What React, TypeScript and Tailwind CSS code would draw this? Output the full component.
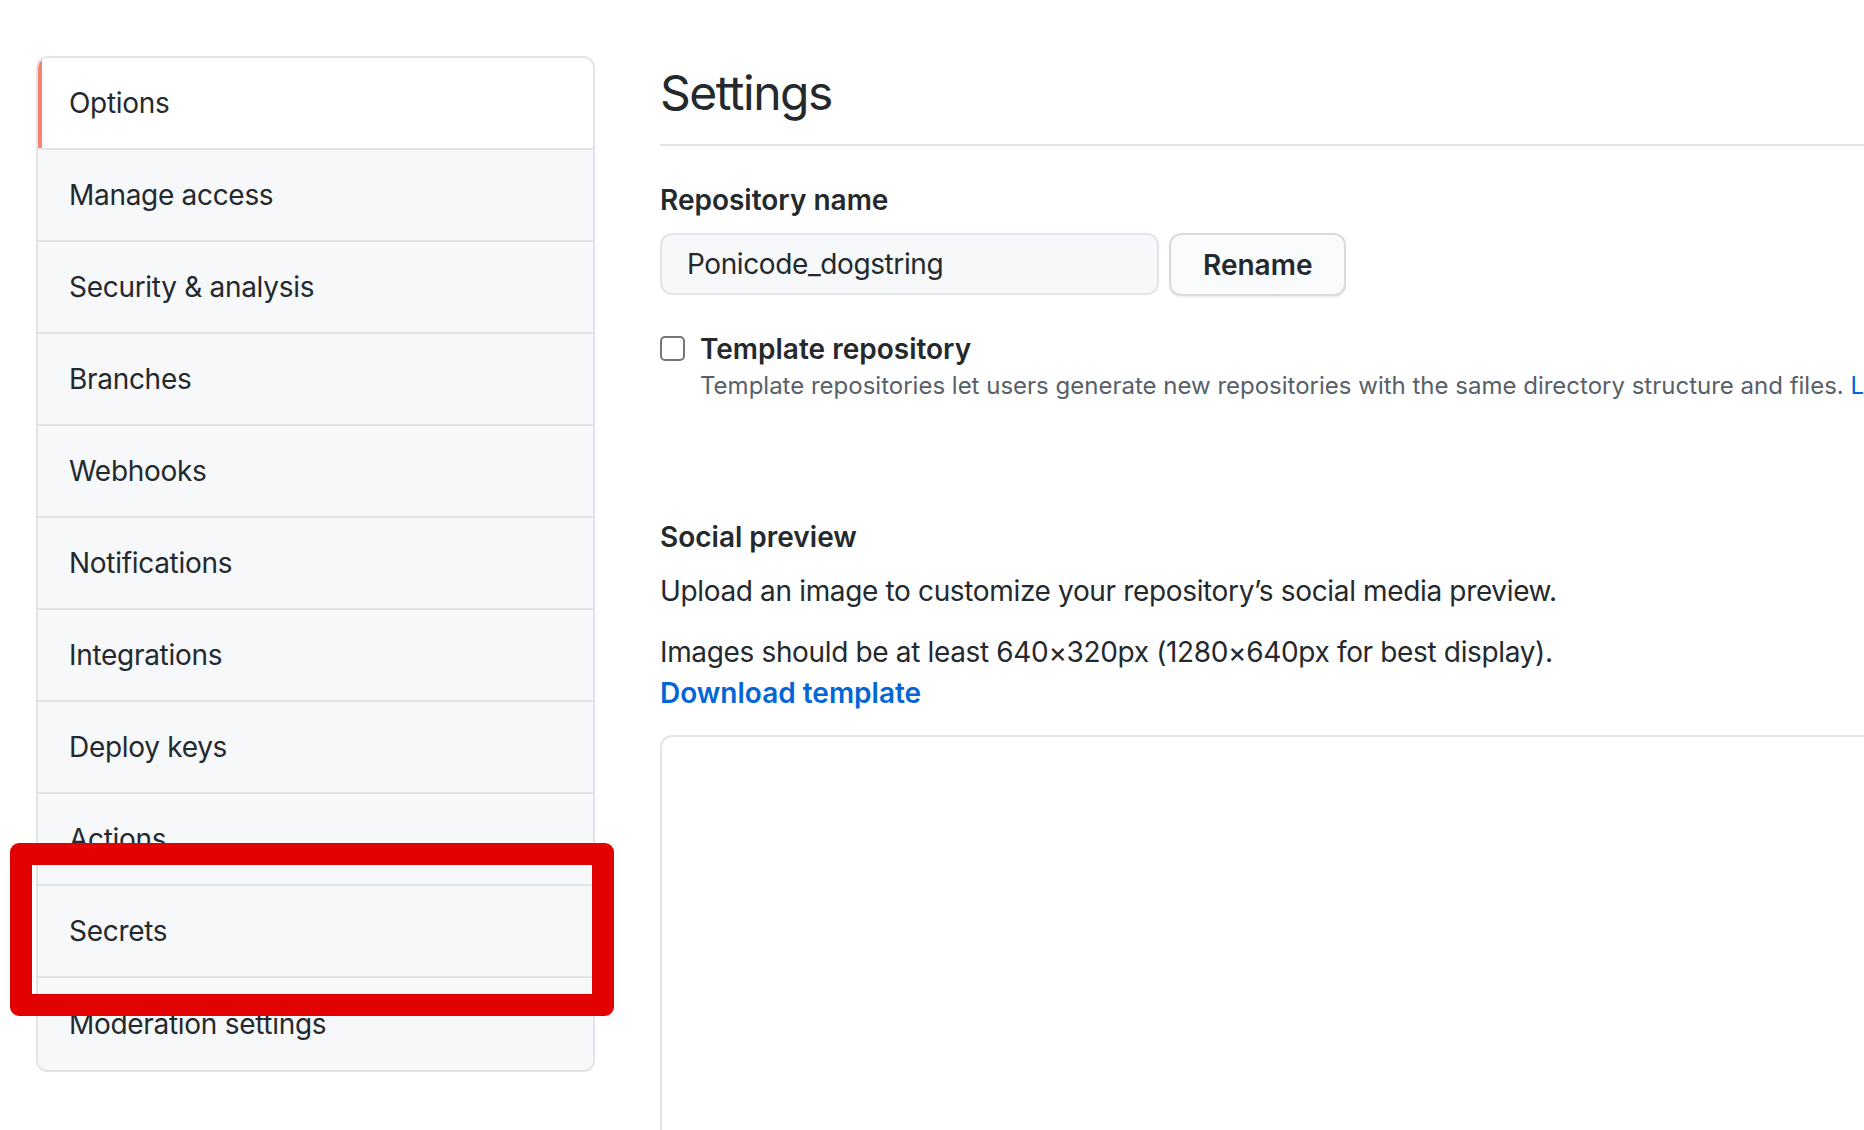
import { useState } from 'react';

const MENU_ITEMS = [
    'Options',
    'Manage access',
    'Security & analysis',
    'Branches',
    'Webhooks',
    'Notifications',
    'Integrations',
    'Deploy keys',
    'Actions',
    'Secrets',
    'Moderation settings',
];

export default function App() {
    const [active] = useState('Options');
    const [name, setName] = useState('Ponicode_dogstring');
    const [isTemplate, setIsTemplate] = useState(false);

    return (
        <div className="relative w-[1864px] h-[1130px] overflow-hidden bg-white text-[#24292e] font-['Inter','Liberation_Sans',sans-serif]">
            <div className="flex pl-[36px] pt-[56px]">
                {/* Sidebar */}
                <nav className="w-[559px] shrink-0 border-2 border-[#e1e4e8] rounded-[12px] overflow-hidden self-start">
                    {MENU_ITEMS.map((item, i) => (
                        <a
                            key={item}
                            className={`relative flex items-center h-[92px] pl-[31px] text-[28px] tracking-[-0.3px] ${
                                item === active ? 'bg-white' : 'bg-[#f6f8fa]'
                            } ${i < MENU_ITEMS.length - 1 ? 'border-b-2 border-[#e1e4e8]' : ''}`}
                        >
                            {item === active && <span className="absolute left-0 top-0 bottom-0 w-[4px] bg-[#f9826c]" />}
                            {item}
                        </a>
                    ))}
                </nav>

                {/* Main */}
                <main className="ml-[65px] w-[1500px] shrink-0">
                    <div className="border-b-2 border-[#e1e4e8] pt-[7px] pb-[21px]">
                        <h2 className="text-[48px] leading-[60px] font-normal tracking-[-1.5px]">Settings</h2>
                    </div>

                    <div className="mt-[33px]">
                        <label className="block text-[28px] leading-[42px] font-semibold">Repository name</label>
                        <div className="flex gap-[10px] mt-[12px]">
                            <input
                                value={name}
                                onChange={(e) => setName(e.target.value)}
                                className="w-[499px] h-[62px] px-[25px] text-[28px] tracking-[-0.4px] bg-[#f6f8fa] border-2 border-[#e1e4e8] rounded-[12px] outline-none"
                            />
                            <button className="h-[63px] px-[32px] text-[28px] font-semibold bg-[#fafbfc] border-2 border-[#d8dadd] rounded-[12px] shadow-[0_2px_0_rgba(27,31,35,0.06)]">
                                Rename
                            </button>
                        </div>
                    </div>

                    <div className="flex mt-[35px]">
                        <button
                            onClick={() => setIsTemplate(!isTemplate)}
                            className="mt-[5px] w-[25px] h-[25px] border-2 border-[#767676] rounded-[5px] bg-white shrink-0"
                        />
                        <div className="ml-[15px]">
                            <div className="text-[28px] leading-[36px] font-semibold">Template repository</div>
                            <p className="mt-[1px] text-[24px] leading-[36px] text-[#586069] whitespace-nowrap">
                                Template repositories let users generate new repositories with the same directory structure and files.{' '}
                                <a className="text-[#0366d6]">Learn more.</a>
                            </p>
                        </div>
                    </div>

                    <div className="mt-[112px]">
                        <h3 className="text-[28px] leading-[42px] font-semibold">Social preview</h3>
                        <p className="mt-[12px] text-[28px] leading-[42px] tracking-[-0.35px]">
                            Upload an image to customize your repository’s social media preview.
                        </p>
                        <p className="mt-[20px] text-[28px] leading-[41px]">
                            <span className="tracking-[-0.35px]">
                                Images should be at least 640×320px (1280×640px for best display).
                            </span>
                            <br />
                            <a className="text-[#0366d6] font-semibold">Download template</a>
                        </p>
                        <div className="mt-[21px] w-[1400px] h-[700px] border-2 border-[#e1e4e8] rounded-[12px]" />
                    </div>
                </main>
            </div>

            {/* Annotation highlight over "Secrets" */}
            <div className="absolute left-[10px] top-[843px] w-[604px] h-[173px] border-[22px] border-[#e20202] rounded-[9px]" />
        </div>
    );
}
